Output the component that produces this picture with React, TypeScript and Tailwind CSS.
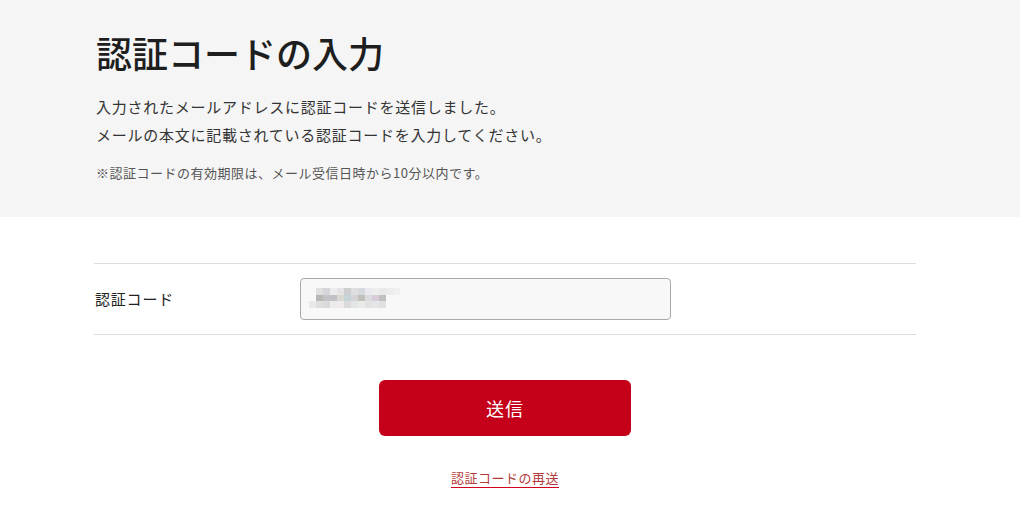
import React from 'react';

// mosaic of the blurred placeholder inside the input
const mosaicRows: { x: number; y: number; colors: string[] }[] = [
    { x: 15, y: 9, colors: ['#e0e0e0', '#d6d6da', '#ececec', '#e6e2e6', '#cecece', '#dedee2', '#d6dade', '#eaeaee', '#eeeeee', '#e9e9e9', '#ededed', '#f0f0f0'] },
    { x: 15, y: 16, colors: ['#b5b8b4', '#c4c4c8', '#c4c0c8', '#d8d8d0', '#c4d4d8', '#d4d4d4', '#c0c0b8', '#dcdce0', '#d8ccd8', '#c0c0c0'] },
    { x: 8, y: 22, colors: ['#e8e8e8', '#dedede', '#dadada', '#ececec', '#eeeaee', '#dadada', '#e2e6e6', '#eaeae6', '#e2e2e2', '#e6e6ea', '#e0e0e0'] },
];

const Mosaic: React.FC = () => (
    <svg width="100" height="32" viewBox="0 0 100 32" className="absolute left-0 top-0">
        {mosaicRows.map((row, ri) =>
            row.colors.map((c, i) => (
                <rect key={`${ri}-${i}`} x={row.x + i * 7} y={row.y} width="7" height="7" fill={c} />
            ))
        )}
    </svg>
);

export default function App() {
    return (
        <div className="min-h-[526px] bg-white text-[#333]" style={{ fontFamily: '"Noto Sans CJK JP", "Noto Sans", sans-serif' }}>
            {/* Header */}
            <div className="bg-[#f5f5f5] pt-[25px] pb-[34px]">
                <div className="ml-[96px]">
                    <h1 className="text-[36px] leading-[54px] font-medium text-[#1e1e1e]">認証コードの入力</h1>
                    <p className="mt-[14px] text-[15px] leading-[28px] tracking-[0.75px]">
                        入力されたメールアドレスに認証コードを送信しました。<br />
                        メールの本文に記載されている認証コードを入力してください。
                    </p>
                    <p className="mt-[14px] text-[13px] leading-[20px] tracking-[0.5px] text-[#555]">
                        ※認証コードの有効期限は、メール受信日時から10分以内です。
                    </p>
                </div>
            </div>

            {/* Form */}
            <div className="ml-[94px] w-[822px] mt-[46px]">
                <div className="flex items-center h-[72px] border-t border-b border-[#dddddd]">
                    <label className="w-[206px] pl-[1px] text-[15px] tracking-[0.8px] text-[#222]">認証コード</label>
                    <div className="relative w-[371px] h-[42px] rounded-[4px] border border-[#a9a9a9] bg-[#f8f8f8] overflow-hidden">
                        <Mosaic />
                    </div>
                </div>

                <div className="flex flex-col items-center">
                    <button className="mt-[45px] w-[252px] h-[56px] rounded-[6px] bg-[#c4001a] text-white text-[18px] tracking-[1px]">
                        送信
                    </button>
                    <a className="mt-[32px] text-[13px] leading-[20px] tracking-[0.5px] text-[#b23a3a] underline decoration-[#d0001e] underline-offset-[4px]">
                        認証コードの再送
                    </a>
                </div>
            </div>
        </div>
    );
}
